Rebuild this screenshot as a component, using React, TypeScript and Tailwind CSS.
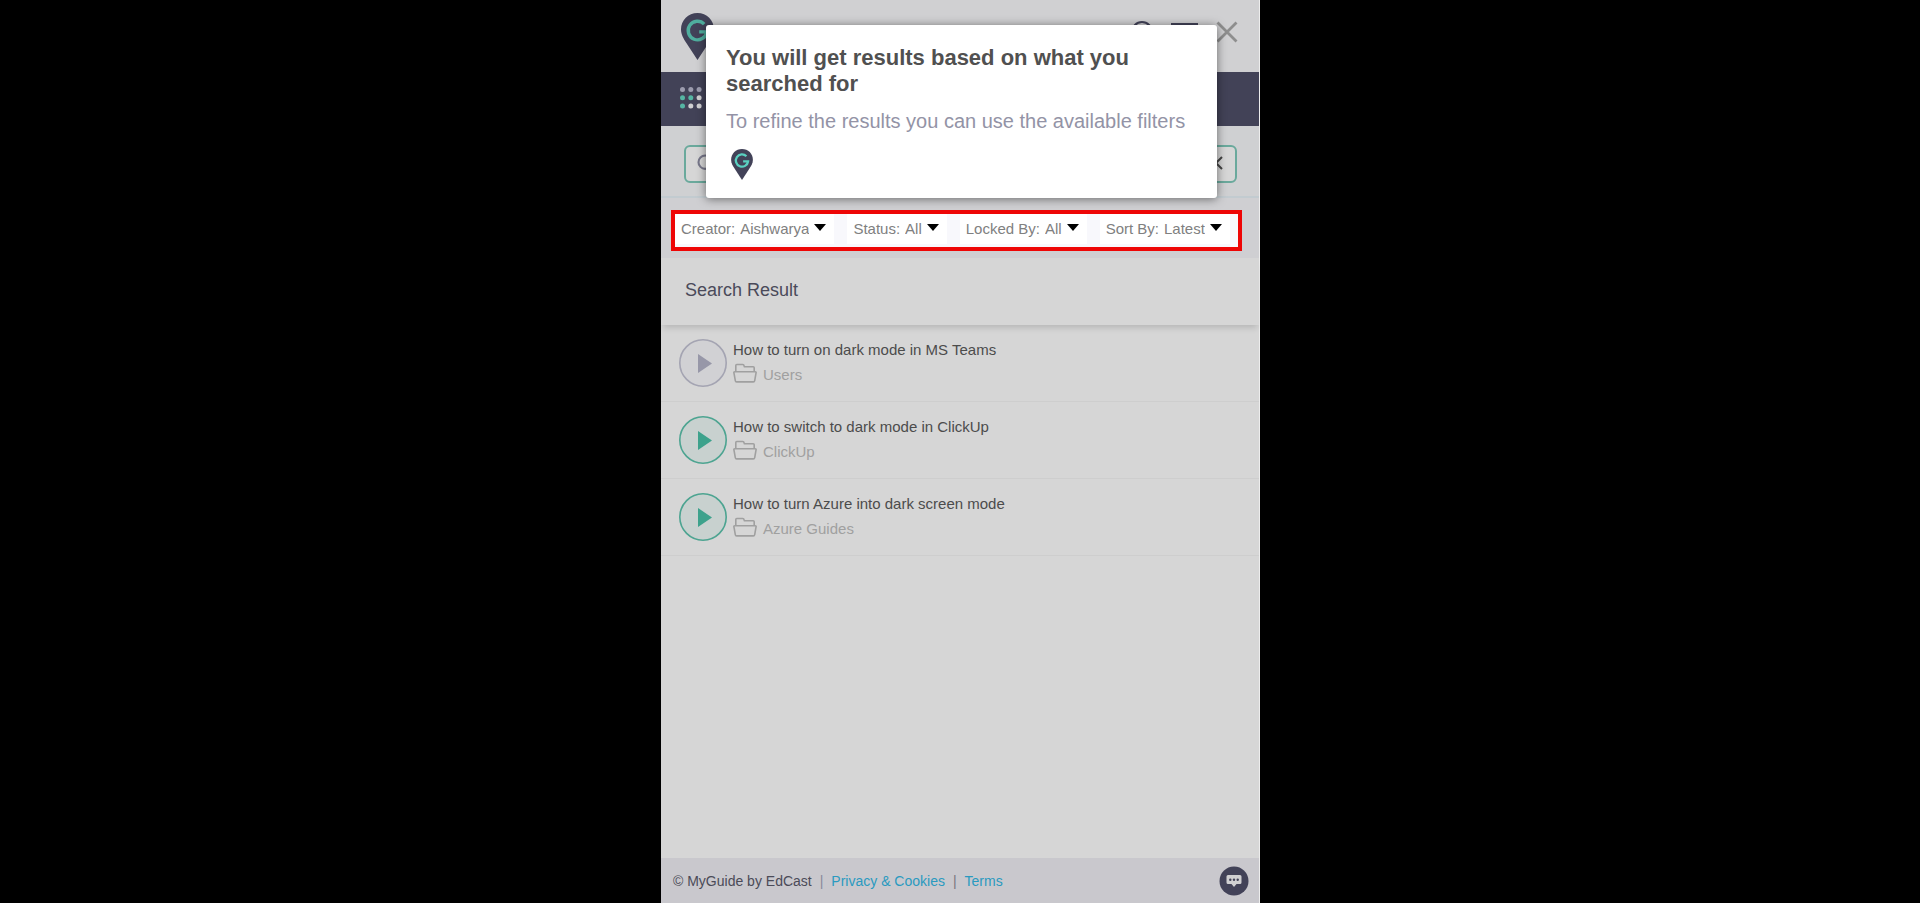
import React, { useState } from 'react';
import { Search } from 'lucide-react';

const filters = [
  { id: 'creator', label: 'Creator:', options: ['Aishwarya', 'All'] },
  { id: 'status', label: 'Status:', options: ['All', 'Published', 'Draft'] },
  { id: 'locked', label: 'Locked By:', options: ['All', 'Me'] },
  { id: 'sort', label: 'Sort By:', options: ['Latest', 'Oldest'] },
];

const results = [
  { id: 1, title: 'How to turn on dark mode in MS Teams', folder: 'Users', active: false },
  { id: 2, title: 'How to switch to dark mode in ClickUp', folder: 'ClickUp', active: true },
  { id: 3, title: 'How to turn Azure into dark screen mode', folder: 'Azure Guides', active: true },
];

const dots = [
  '#9c9cae', '#9c9cae', '#9c9cae',
  '#55b5a3', '#55b5a3', '#d0d0d2',
  '#55b5a3', '#d0d0d2', '#d0d0d2',
];

function PinLogo({ className, accent }: { className: string; accent: string }) {
  return (
    <svg viewBox="0 0 33 47" className={className} fill="none" aria-hidden="true">
      <path
        d="M16.5 0C7.2 0 0 7.2 0 16.3c0 5.4 2.6 9.4 5.2 13.4L16.5 47l11.3-17.3C30.4 25.7 33 21.7 33 16.3 33 7.2 25.8 0 16.5 0Z"
        fill="#424258"
      />
      <path d="M23.2 11.1A9.3 9.3 0 1 0 25.7 18.9H18.2" stroke={accent} strokeWidth="3.4" />
    </svg>
  );
}

function FolderIcon() {
  return (
    <svg viewBox="0 0 24 20" className="h-5 w-6" fill="none" stroke="#a0a0a0" strokeWidth="1.6" strokeLinejoin="round" aria-hidden="true">
      <path d="M2.800 8.500V2.500q0-1 1-1h6q1 0 1.200 1l.4 1.300h8.800q1 0 1 1v3.700" />
      <path d="M1.800 8.700h20.400q1.100 0 .9 1l-1.400 8q-.2 1.200-1.300 1.200H3.600q-1.100 0-1.300-1.200l-1.400-8q-.2-1 .9-1Z" />
    </svg>
  );
}

function PlayIcon({ active }: { active: boolean }) {
  return (
    <svg viewBox="0 0 48 48" className="h-12 w-12" aria-hidden="true">
      <circle cx="24" cy="24" r="23.2" fill={active ? '#c8d1cf' : '#d1d1d4'} stroke={active ? '#4da491' : '#a4a4b2'} strokeWidth="1.6" />
      <path d="M19 15v19l14-9.500Z" fill={active ? '#3da28c' : '#9797a8'} />
    </svg>
  );
}

export default function App() {
  const [query, setQuery] = useState('');

  return (
    <div className="min-h-screen bg-black font-['Liberation_Sans',Arial,sans-serif]">
      <div className="relative mx-auto flex min-h-screen w-full max-w-[600px] flex-col border-l border-r border-l-black border-r-[#ededed] bg-[#d6d6d6]">
        {/* Header */}
        <header className="flex h-[72px] items-start justify-between bg-[#d0d0d2] pt-[13px] pr-[21px] pl-5">
          <PinLogo className="h-[47px] w-[33px]" accent="#4fae9e" />
          <div className="flex items-center gap-[18px] pt-2">
            <button aria-label="Account">
              <svg viewBox="0 0 22 22" className="h-[22px] w-[22px]" fill="none" stroke="#424258" strokeWidth="2">
                <circle cx="11" cy="11" r="10" />
              </svg>
            </button>
            <button aria-label="Menu">
              <svg viewBox="0 0 27 18" className="h-[18px] w-[27px]" fill="#424258">
                <path d="M0 0h27v3H0zM0 7h27v3H0zM0 14h27v3H0z" />
              </svg>
            </button>
            <button aria-label="Close">
              <svg viewBox="0 0 22 22" className="h-[22px] w-[22px]" fill="none" stroke="#8e8e8e" strokeWidth="2.8">
                <path d="M1.500 1.500l19 19M20.500 1.500l-19 19" />
              </svg>
            </button>
          </div>
        </header>

        {/* Navigation */}
        <nav className="flex h-[54px] items-center bg-[#424257] px-[18px] pb-0.5">
          <button aria-label="Apps">
            <svg viewBox="0 0 24 24" className="h-6 w-6">
              {dots.map((color, index) => (
                <circle key={index} cx={3.5 + (index % 3) * 8.3} cy={3.5 + Math.floor(index / 3) * 8.3} r="2.5" fill={color} />
              ))}
            </svg>
          </button>
        </nav>

        {/* Search box */}
        <div className="h-[72px] border-b-2 border-[#c2cbd0] bg-[#cfd0d2] pt-[19px] pr-[22px] pl-[23px]">
          <div className="flex h-[38px] items-center justify-between rounded-md border-2 border-[#6aa99c] bg-[#d6d6d6] pr-3 pb-0.5 pl-2.5">
            <Search className="h-5 w-5 text-[#77778a]" strokeWidth={2.5} aria-hidden="true" />
            <input
              type="text"
              aria-label="Search guides"
              value={query}
              onChange={(e) => setQuery(e.target.value)}
              className="min-w-0 flex-1 px-2 focus:outline-none"
            />
            <button aria-label="Clear search" onClick={() => setQuery('')}>
              <svg viewBox="0 0 14 14" className="h-3.5 w-3.5" fill="none" stroke="#444444" strokeWidth="2">
                <path d="M1 1l12 12M13 1L1 13" />
              </svg>
            </button>
          </div>
        </div>

        {/* Filters */}
        <div className="bg-[#cfcfd2] pt-3 pr-[17px] pb-[7px] pl-2.5">
          <div className="flex items-center gap-[13px] border-4 border-[#ee0606] bg-[#f8f8fc] pb-[3px]">
            {filters.map((filter) => (
              <div key={filter.id} className="flex h-[30px] items-center gap-[5px] bg-white pr-2 pl-1.5 text-[15px] whitespace-nowrap text-[#808080]">
                <label htmlFor={filter.id}>{filter.label}</label>
                <select id={filter.id} className="field-sizing-content appearance-none bg-transparent focus:outline-none">
                  {filter.options.map((option) => (
                    <option key={option}>{option}</option>
                  ))}
                </select>
                <svg viewBox="0 0 12 7" className="mb-1 h-[7px] w-3" aria-hidden="true">
                  <path d="M0 0h12L6 7Z" fill="#000000" />
                </svg>
              </div>
            ))}
          </div>
        </div>

        <div className="flex h-[67px] items-center px-6 pb-[3px] shadow-[0_5px_6px_-2px_rgba(0,0,0,0.14)]">
          <h2 className="text-lg text-[#4a4a5a]">Search Result</h2>
        </div>

        {/* Results */}
        <ul className="flex-1">
          {results.map((result) => (
            <li key={result.id} className="flex h-[77px] items-start gap-[6px] border-b border-[#cecece] pt-[14px] pl-[18px]">
              <button aria-label={`Play ${result.title}`}>
                <PlayIcon active={result.active} />
              </button>
              <div className="text-[15px]">
                <h3 className="leading-[22px] text-[#4c4c4c]">{result.title}</h3>
                <div className="flex items-center gap-1.5 text-[#a0a0a0]">
                  <FolderIcon />
                  <span className="pt-1 leading-5">{result.folder}</span>
                </div>
              </div>
            </li>
          ))}
        </ul>

        {/* Footer */}
        <footer className="flex h-[45px] items-center justify-between bg-[#c9c8cd] pr-2.5 pl-3 text-sm text-[#4b4b58]">
          <div className="flex gap-2">
            <span>© MyGuide by EdCast</span>
            <span className="text-[#88889a]">|</span>
            <a href="#privacy" className="text-[#2a9ac0]">Privacy &amp; Cookies</a>
            <span className="text-[#77777f]">|</span>
            <a href="#terms" className="text-[#2a9ac0]">Terms</a>
          </div>
          <button aria-label="Chat">
            <svg viewBox="0 0 30 30" className="h-[30px] w-[30px]">
              <circle cx="15" cy="15" r="14.5" fill="#424258" />
              <path d="M9 9h12q1.500 0 1.500 1.500v6q0 1.500-1.500 1.500h-3.500L15 21l-2.500-3H9q-1.500 0-1.500-1.500v-6Q7.500 9 9 9Z" fill="#d0d0d2" />
              <circle cx="11.3" cy="13.7" r="1.2" fill="#424258" />
              <circle cx="15" cy="13.7" r="1.2" fill="#424258" />
              <circle cx="18.7" cy="13.7" r="1.2" fill="#424258" />
            </svg>
          </button>
        </footer>

        {/* Guide tooltip */}
        <div role="dialog" aria-labelledby="tip-title" className="absolute top-[25px] right-[42px] left-[45px] z-20 rounded-[3px] bg-white px-5 pt-5 pb-[18px] shadow-[0_1px_10px_rgba(0,0,0,0.5)]">
          <h1 id="tip-title" className="text-[22px] leading-[26px] font-bold text-[#505050]">
            You will get results based on what you searched for
          </h1>
          <p className="mt-3 text-xl leading-6 text-[#9393a6]">
            To refine the results you can use the available filters
          </p>
          <div className="mt-4 pl-[5px]">
            <PinLogo className="h-[31px] w-[22px]" accent="#5ad0c0" />
          </div>
        </div>
      </div>
    </div>
  );
}
